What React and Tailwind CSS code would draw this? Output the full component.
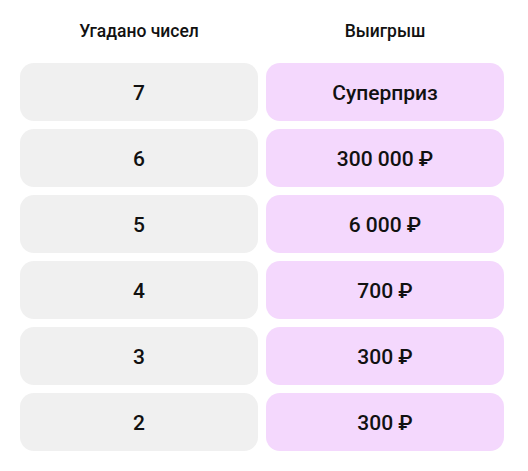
import React from 'react';

const rows = [
  { n: '7', prize: 'Суперприз' },
  { n: '6', prize: '300 000 ₽' },
  { n: '5', prize: '6 000 ₽' },
  { n: '4', prize: '700 ₽' },
  { n: '3', prize: '300 ₽' },
  { n: '2', prize: '300 ₽' },
];

export default function App() {
  return (
    <div className="w-[528px] h-[471px] bg-white text-[#111] font-['Roboto',sans-serif]">
      <div className="ml-[20px] w-[484px] grid grid-cols-2 gap-x-2 gap-y-2">
        <div className="h-[55px] pt-2 flex items-center justify-center text-[17.5px] font-medium">Угадано чисел</div>
        <div className="h-[55px] pt-2 flex items-center justify-center text-[17.5px] font-medium">Выигрыш</div>
        {rows.map((r) => (
          <React.Fragment key={r.n}>
            <div className="h-[58px] pt-1 rounded-[14px] bg-[#f0f0f0] flex items-center justify-center text-[21px] font-medium">
              {r.n}
            </div>
            <div className="h-[58px] pt-1 rounded-[14px] bg-[#f4d8fd] flex items-center justify-center text-[21px] font-medium">
              {r.prize}
            </div>
          </React.Fragment>
        ))}
      </div>
    </div>
  );
}
